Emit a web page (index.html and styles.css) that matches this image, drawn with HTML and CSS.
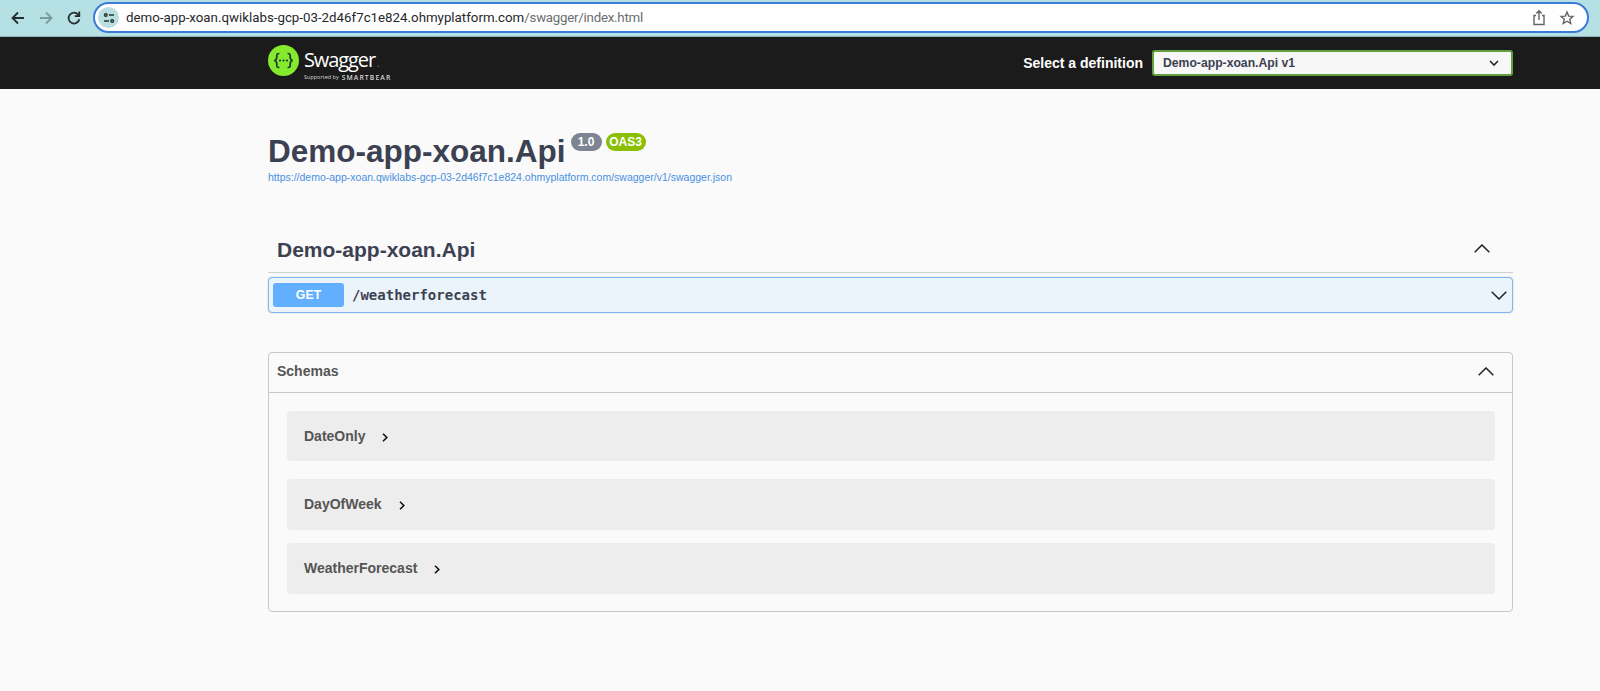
FILE: index.html
```html
<!DOCTYPE html>
<html lang="en">
<head>
<meta charset="utf-8">
<title>Swagger UI</title>
<link rel="stylesheet" href="styles.css">
</head>
<body>
<div class="browser">
  <svg class="nav-icon" viewBox="0 0 16 16"><path d="M14 8H2.8M8 2.5 2.5 8 8 13.5"/></svg>
  <svg class="nav-icon nav-icon--off" viewBox="0 0 16 16"><path d="M2 8h11.2M8 2.5 13.500 8 8 13.500"/></svg>
  <svg class="nav-icon" viewBox="0 0 16 16"><path d="M13.300 9.200A5.400 5.400 0 1 1 12.200 4.700L13 5.600M13.300 1.600V6.200H8.800"/></svg>
  <div class="address">
    <span class="site-info">
      <svg viewBox="0 0 12 12"><circle cx="2.800" cy="3" r="1.300"/><path d="M6 3h5M1 9h5"/><circle cx="9.200" cy="9" r="1.300"/></svg>
    </span>
    <span class="url">demo-app-xoan.qwiklabs-gcp-03-2d46f7c1e824.ohmyplatform.com<span class="url-path">/swagger/index.html</span></span>
    <svg class="action" viewBox="0 0 16 18"><path d="M5 6.500H3V15.500H13V6.500H11M8 11V2M5.300 4.500 8 1.800 10.700 4.500"/></svg>
    <svg class="action action--star" viewBox="0 0 16 16"><path d="M8 2 9.700 6.100 14 6.400 10.700 9.200 11.800 13.500 8 11.200 4.200 13.500 5.300 9.200 2 6.400 6.300 6.100Z"/></svg>
  </div>
</div>

<header class="topbar">
  <div class="wrap topbar-inner">
    <div class="logo">
      <svg class="logo-mark" viewBox="0 0 31 31"><circle cx="15.500" cy="15.500" r="15.500" fill="#85ea2d"/><g fill="none" stroke="#1d3b35" stroke-width="1.700"><path d="M11.400 8.500C8.800 8.300 8.700 9.600 8.800 11.600C8.900 14 8.300 15.300 6.200 15.500C8.300 15.700 8.900 17 8.800 19.400C8.700 21.400 8.800 22.700 11.400 22.500"/><path d="M19.600 8.500C22.200 8.300 22.300 9.600 22.200 11.600C22.100 14 22.700 15.300 24.800 15.500C22.700 15.700 22.100 17 22.200 19.400C22.300 21.400 22.200 22.700 19.600 22.500"/></g><g fill="#1d3b35"><circle cx="12" cy="15.500" r="1.100"/><circle cx="15.500" cy="15.500" r="1.100"/><circle cx="19" cy="15.500" r="1.100"/></g></svg>
      <div class="logo-text">
        <div class="logo-name">Swagger<span class="logo-dot">.</span></div>
        <div class="logo-by"><span>Supported by</span><b>SMARTBEAR</b></div>
      </div>
    </div>
    <div class="definition">
      <span class="definition-label">Select a definition</span>
      <div class="select">
        <span>Demo-app-xoan.Api v1</span>
        <svg viewBox="0 0 10 6"><path d="M1 1l4 4 4-4"/></svg>
      </div>
    </div>
  </div>
</header>

<main class="wrap">
  <section class="info">
    <div class="title-row">
      <h1>Demo-app-xoan.Api</h1>
      <span class="badge">1.0</span>
      <span class="badge badge--oas">OAS3</span>
    </div>
    <a class="spec-link">https://demo-app-xoan.qwiklabs-gcp-03-2d46f7c1e824.ohmyplatform.com/swagger/v1/swagger.json</a>
  </section>

  <section class="tag">
    <h2>Demo-app-xoan.Api</h2>
    <svg class="chevron" viewBox="0 0 16 9"><path d="M.7 8.300 8 1l7.300 7.300"/></svg>
  </section>

  <div class="operation">
    <span class="method">GET</span>
    <span class="path">/weatherforecast</span>
    <svg class="chevron" viewBox="0 0 16 9"><path d="M.7.700 8 8l7.300-7.300"/></svg>
  </div>

  <section class="schemas">
    <div class="schemas-head">
      <span>Schemas</span>
      <svg class="chevron" viewBox="0 0 16 9"><path d="M.7 8.300 8 1l7.300 7.300"/></svg>
    </div>
    <div class="model model--first">DateOnly<svg class="arrow" viewBox="0 0 6 9"><path d="M1 .7l3.800 3.800L1 8.300"/></svg></div>
    <div class="model">DayOfWeek<svg class="arrow" viewBox="0 0 6 9"><path d="M1 .7l3.800 3.800L1 8.300"/></svg></div>
    <div class="model model--last">WeatherForecast<svg class="arrow" viewBox="0 0 6 9"><path d="M1 .7l3.800 3.800L1 8.300"/></svg></div>
  </section>
</main>
</body>
</html>
```
FILE: styles.css
```css
* { box-sizing: border-box; }
body {
  margin: 0;
  background: #fafafa;
  color: #3b4151;
  font-family: "Liberation Sans", Arial, sans-serif;
}
svg { display: block; flex: none; fill: none; stroke: #222; }

.browser {
  display: flex;
  align-items: center;
  height: 37px;
  padding: 0 11px 1px 10px;
  background: #b5e0e4;
  border-bottom: 1px solid #8db4b8;
}
.nav-icon { width: 16px; height: 16px; margin-right: 12px; stroke: #242c2e; stroke-width: 1.8; }
.nav-icon--off { stroke: #7d999c; }
.address {
  display: flex;
  align-items: center;
  flex: 1;
  height: 31px;
  margin-left: -1px;
  padding: 0 12px 0 3px;
  border: 2px solid #3b7ad9;
  border-radius: 16px;
  background: #fff;
}
.site-info {
  display: flex;
  align-items: center;
  justify-content: center;
  width: 21px;
  height: 21px;
  border-radius: 50%;
  background: #b9dfe1;
}
.site-info svg { width: 12px; height: 12px; stroke: #2a3335; stroke-width: 1.4; }
.url {
  flex: 1;
  margin-left: 7px;
  font: 13.3px/18px Roboto, sans-serif;
  color: #26282b;
  white-space: nowrap;
}
.url-path { color: #6a6d70; letter-spacing: -.25px; }
.action { width: 16px; height: 18px; stroke: #616466; stroke-width: 1.4; }
.action--star { height: 16px; margin-left: 12px; }

.wrap { width: 1245px; margin-left: 268px; }
.topbar { height: 52px; background: #1b1b1b; }
.topbar-inner { display: flex; justify-content: space-between; height: 52px; }
.logo { display: flex; padding-top: 8px; }
.logo-mark { width: 31px; height: 31px; stroke: none; }
.logo-text { margin-left: 5px; color: #fff; }
.logo-name { height: 28px; font: 20px/30px "Open Sans", sans-serif; letter-spacing: -1.1px; }
.logo-dot { margin-left: 2px; color: #777; font-size: 10px; }
.logo-by { display: flex; gap: 3px; font: 5.5px/9px "Open Sans", sans-serif; color: #d8d8d8; white-space: nowrap; }
.logo-by b { font-weight: 600; font-size: 6.8px; letter-spacing: 1.1px; }
.definition { display: flex; align-items: center; }
.definition-label { margin-right: 9px; font-size: 14px; font-weight: bold; color: #fff; white-space: nowrap; }
.select {
  display: flex;
  align-items: center;
  justify-content: space-between;
  width: 361px;
  height: 26px;
  padding: 0 12px 0 9px;
  border: 2px solid #62a03f;
  border-radius: 3px;
  background: #f7f7f7;
  font-size: 12.2px;
  font-weight: bold;
}
.select svg { width: 10px; height: 6px; stroke-width: 1.6; }

.info { height: 144px; padding-top: 43px; }
.title-row { display: flex; height: 39px; }
h1 { margin: 0; font-size: 31.5px; line-height: 38px; font-weight: bold; white-space: nowrap; }
.badge {
  width: 31px;
  height: 18px;
  margin: 1px 0 0 5px;
  border-radius: 9px;
  background: #7d8492;
  color: #fff;
  font-size: 12px;
  line-height: 18px;
  font-weight: bold;
  text-align: center;
}
.badge--oas { width: 40px; margin-left: 4px; background: #89bf04; }
.spec-link { display: block; font-size: 10.5px; line-height: 13px; color: #4990e2; white-space: nowrap; }

.tag {
  display: flex;
  align-items: center;
  justify-content: space-between;
  height: 40px;
  padding: 0 23px 6px 9px;
  border-bottom: 1px solid #d0d1d3;
}
.tag .chevron { margin-bottom: 2px; }
h2 { margin: 0; font-size: 21px; line-height: 26px; font-weight: bold; }
.chevron { width: 16px; height: 9px; stroke-width: 1.5; }
.operation {
  display: flex;
  align-items: center;
  height: 36px;
  margin-top: 4px;
  padding: 0 5px 0 4px;
  border: 1px solid #7bb8f3;
  border-radius: 4px;
  background: #ebf3fb;
  box-shadow: 0 0 2px rgba(0, 0, 0, .19);
}
.method {
  width: 71px;
  height: 24px;
  border-radius: 3px;
  background: #61affe;
  color: #fff;
  font-size: 12.3px;
  line-height: 24px;
  font-weight: bold;
  text-align: center;
}
.path { flex: 1; margin-left: 8px; font: bold 14px/18px "DejaVu Sans Mono", monospace; }

.schemas {
  height: 260px;
  margin-top: 39px;
  border: 1px solid #c6c8ca;
  border-radius: 4px;
  color: #555;
  font-size: 14px;
  font-weight: bold;
}
.schemas-head {
  display: flex;
  align-items: center;
  justify-content: space-between;
  height: 40px;
  padding: 0 18px 4px 8px;
  border-bottom: 1px solid #c6c8ca;
}
.schemas-head .chevron { margin-top: 2px; }
.model {
  display: flex;
  align-items: center;
  height: 51px;
  margin: 18px 17px 0 18px;
  padding: 0 17px 1px;
  border-radius: 4px;
  background: #ededed;
}
.model--first { height: 50px; }
.model--last { margin-top: 13px; }
.arrow { width: 6px; height: 9px; margin: 3px 0 0 17px; stroke: #111; stroke-width: 1.6; }
```
